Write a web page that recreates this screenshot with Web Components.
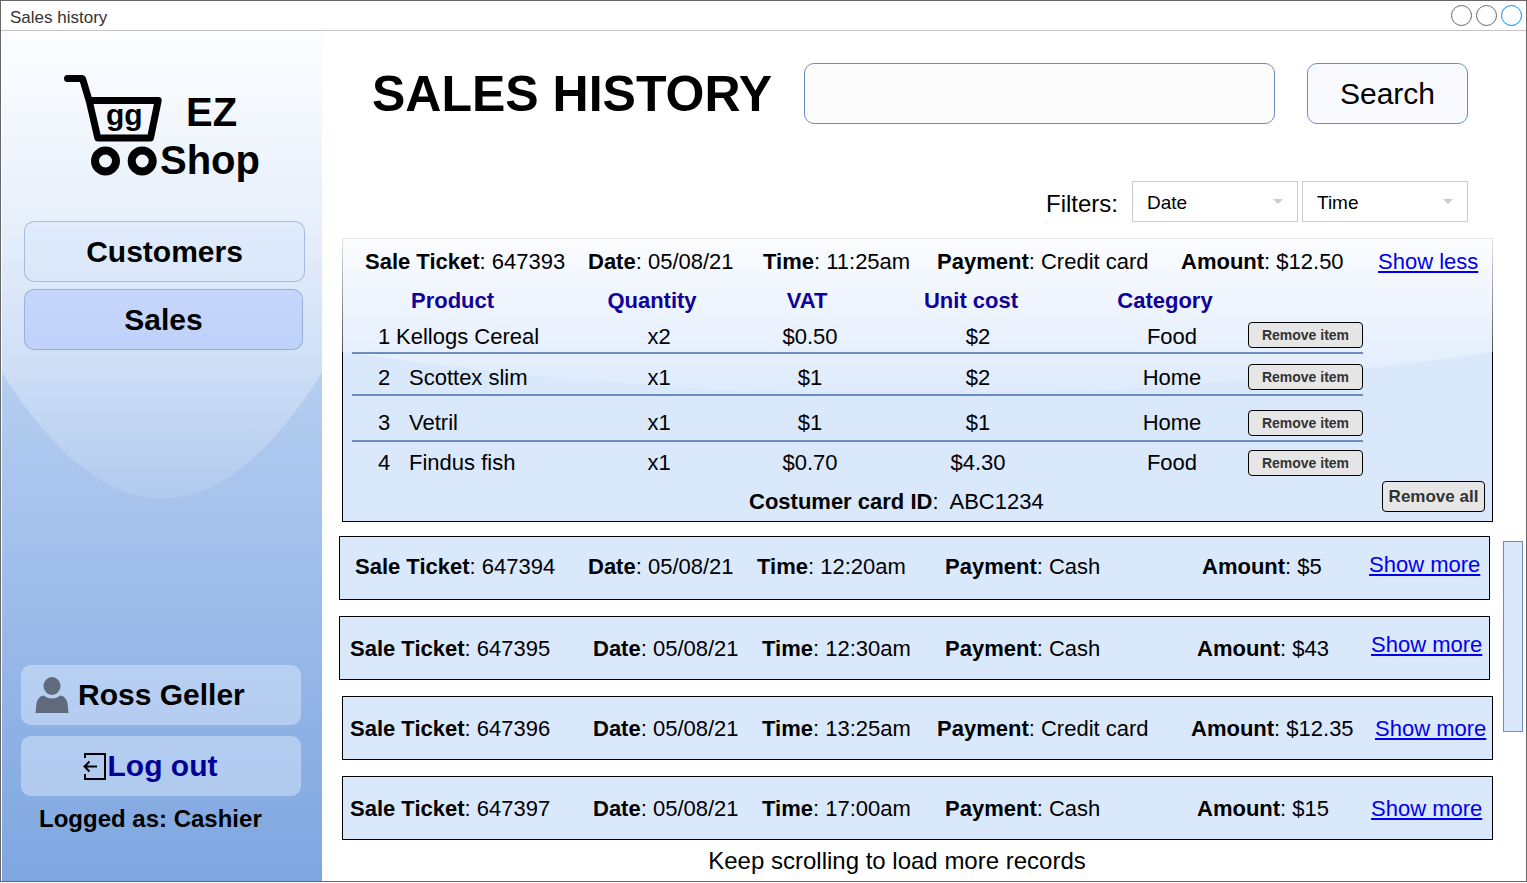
<!DOCTYPE html>
<html lang="en">
<head>
<meta charset="utf-8">
<title>Sales history</title>
<style>
  body { margin: 0; background: #fff; color: #000; font-family: "Liberation Sans", Arial, Helvetica, sans-serif; font-size: 22px; line-height: 26px; }
  .list { display: flex; flex-direction: column; gap: 16px; }
  sale-ticket { margin: 0 0 -2px 3px; }
  .early { margin-right: 3px; --link-lift: 8px; }
  .late { margin-left: 3px; }
  .a { --inset: 15px; --cols: 233fr 169fr 188fr 257fr 167fr 120fr; --text-lift: 4px; }
  .b { --inset: 10px; --cols: 243fr 169fr 183fr 252fr 174fr 118fr; }
  .c { --inset: 7px; --cols: 243fr 169fr 175fr 254fr 184fr 117fr; }
  .d { --inset: 7px; --cols: 243fr 169fr 183fr 252fr 174fr 121fr; }
</style>
</head>
<body>
<app-window caption="Sales history">
  <shop-sidebar slot="side" user="Ross Geller" role-name="Cashier"></shop-sidebar>
  <sales-toolbar heading="SALES HISTORY"></sales-toolbar>
  <scroll-pane>
    <div class="list">
      <sale-ticket></sale-ticket>
      <sale-row class="early a" ticket="647394" date="05/08/21" time="12:20am" payment="Cash" amount="$5"></sale-row>
      <sale-row class="early b" ticket="647395" date="05/08/21" time="12:30am" payment="Cash" amount="$43"></sale-row>
      <sale-row class="late c" ticket="647396" date="05/08/21" time="13:25am" payment="Credit card" amount="$12.35"></sale-row>
      <sale-row class="late d" ticket="647397" date="05/08/21" time="17:00am" payment="Cash" amount="$15"></sale-row>
    </div>
    <span slot="more">Keep scrolling to load more records</span>
  </scroll-pane>
</app-window>

<script>
class BaseElement extends HTMLElement {
  connectedCallback() {
    if (this.shadowRoot) return;
    this.attachShadow({ mode: "open" }).innerHTML = this.render();
  }
  val(name) { return this.getAttribute(name) || ""; }
}

customElements.define("app-window", class extends BaseElement {
  render() {
    return `<style>
      :host { display: flex; flex-direction: column; box-sizing: border-box; min-height: calc(100vh - 1px); border: 1px solid #666; }
      header { display: flex; align-items: center; justify-content: space-between; box-sizing: border-box; height: 30px; padding: 0 4px 0 9px; border-bottom: 1px solid #c4c4c4; }
      h1 { margin: 4px 0 0; font-size: 17px; line-height: 20px; font-weight: normal; color: #333; }
      .dots { display: flex; gap: 4px; }
      .dots i { box-sizing: border-box; width: 21px; height: 21px; border: 1px solid #666; border-radius: 50%; }
      .dots i:last-child { border-color: #008cff; }
      .body { flex: 1; display: grid; grid-template-columns: 322px minmax(0, 1fr); }
      main { padding: 0 3px 0 16px; }
    </style>
    <header><h1>${this.val("caption")}</h1><div class="dots"><i></i><i></i><i></i></div></header>
    <div class="body"><slot name="side"></slot><main><slot></slot></main></div>`;
  }
});

customElements.define("shop-sidebar", class extends BaseElement {
  render() {
    return `<style>
      :host { display: grid; margin: 0 1px; background: linear-gradient(#dae8fc, #7ea6e0); }
      .glass, .content { grid-area: 1 / 1; min-width: 0; min-height: 0; }
      .glass { width: 100%; height: 100%; contain: size; }
      .content { display: flex; flex-direction: column; padding: 44px 21px 50px 19px; }
      .logo { display: block; margin: 0 0 0 43px; }
      .logo text { font-family: inherit; font-weight: bold; font-size: 40px; }
      .logo .mark { font-size: 30px; }
      nav { display: flex; flex-direction: column; gap: 7px; margin: 36px 0 0 3px; }
      nav a, .user, button { box-sizing: border-box; border-radius: 10px; font: bold 30px/34px "Liberation Sans", Arial, sans-serif; }
      nav a { display: flex; align-items: center; justify-content: center; height: 61px; color: #000; text-decoration: none; border: 1px solid rgba(108,142,191,.5); background: rgba(218,232,252,.5); margin-right: -4px; }
      nav a.on { background: rgba(176,195,253,.5); margin-right: -2px; }
      .foot { margin-top: auto; display: flex; flex-direction: column; gap: 11px; }
      .user, button { height: 60px; border: 1px solid rgba(218,232,252,.1); background: rgba(218,232,252,.5); color: #000; display: flex; align-items: center; }
      .user { gap: 9px; padding: 0 13px; }
      button { justify-content: center; gap: 2px; padding: 0 22px 0 0; color: #009; }
      p { margin: 0 0 0 18px; font-size: 24px; line-height: 24px; font-weight: bold; }
    </style>
    <svg class="glass" viewBox="0 0 320 850" preserveAspectRatio="none" aria-hidden="true">
      <defs><linearGradient id="g" x1="0" y1="0" x2="0" y2="1"><stop offset="0" stop-color="#fff" stop-opacity=".9"/><stop offset="1" stop-color="#fff" stop-opacity=".1"/></linearGradient></defs>
      <path d="M0 0V342Q160 594 320 342V0Z" fill="url(#g)"/>
    </svg>
    <div class="content">
      <svg class="logo" width="200" height="110" viewBox="64 75 200 110" role="img" aria-label="EZ Shop">
        <g fill="none" stroke="#000" stroke-width="7" stroke-linecap="round" stroke-linejoin="round">
          <path d="M67.500 78.500H82.500L89.500 102L97.800 138H150.500L158.200 100.500H91"/>
          <g stroke-width="8"><circle cx="105.500" cy="161" r="10.500"/><circle cx="142.200" cy="161" r="10.500"/></g>
        </g>
        <text class="mark" x="106" y="125">gg</text>
        <text x="186" y="126">EZ</text>
        <text x="160" y="174">Shop</text>
      </svg>
      <nav><a href="#customers">Customers</a><a class="on" href="#sales" aria-current="page">Sales</a></nav>
      <div class="foot">
        <div class="user">
          <svg width="34" height="38" viewBox="0 0 34 38" fill="#5f6b7d" aria-hidden="true"><ellipse cx="17" cy="10" rx="8.500" ry="9"/><path d="M.5 37L1.500 27Q3 20.500 8.500 19.500Q12.500 22.500 17 22.500Q21.500 22.500 25.500 19.500Q31 20.500 32.500 27L33.500 37Z"/></svg>
          <span>${this.val("user")}</span>
        </div>
        <button type="button">
          <svg width="23" height="28" viewBox="0 0 23 28" fill="none" stroke="#000" stroke-width="2" aria-hidden="true"><path d="M2 6V2H22V27H2V22M14 14.500H2M6.500 9.500L1.500 14.500L6.500 19.500"/></svg>
          <span>Log out</span>
        </button>
        <p>Logged as: ${this.val("role-name")}</p>
      </div>
    </div>`;
  }
});

customElements.define("sales-toolbar", class extends BaseElement {
  render() {
    return `<style>
      :host { display: block; padding: 32px 55px 16px 33px; }
      form, .filters { display: flex; align-items: center; }
      h2 { margin: 0 32px 0 0; font-size: 50px; line-height: 60px; white-space: nowrap; }
      input, button { box-sizing: border-box; height: 61px; border: 1px solid #6c8ebf; border-radius: 10px; font: 30px/34px "Liberation Sans", Arial, sans-serif; color: #000; }
      input { flex: 1; min-width: 0; padding: 0 16px; background: #fcfcfc; }
      button { width: 161px; margin-left: 32px; background: #f8faff; }
      .filters { justify-content: flex-end; gap: 4px; margin-top: 57px; }
      .filters > label { font-size: 24px; line-height: 28px; margin-right: 10px; padding-top: 4px; }
      .pick { display: grid; align-items: center; width: 166px; }
      .pick > * { grid-area: 1 / 1; }
      .pick svg { justify-self: end; margin-right: 15px; pointer-events: none; }
      select { appearance: none; box-sizing: border-box; width: 100%; height: 41px; padding: 2px 14px 0; border: 1px solid #ccc; border-radius: 0; background: #fff; color: #000; font: 19px/22px "Liberation Sans", Arial, sans-serif; }
    </style>
    <form onsubmit="return false"><h2>${this.val("heading")}</h2><input type="text" aria-label="Search sales"><button type="submit">Search</button></form>
    <div class="filters">
      <label for="date">Filters:</label>
      ${["Date", "Time"].map(n => `<div class="pick"><select id="${n.toLowerCase()}" aria-label="${n}"><option>${n}</option></select><svg width="10" height="5" viewBox="0 0 10 5" aria-hidden="true"><path d="M0 0H10L5 5Z" fill="#ccc"/></svg></div>`).join("")}
    </div>`;
  }
});

customElements.define("scroll-pane", class extends BaseElement {
  render() {
    return `<style>
      :host { display: grid; grid-template-columns: minmax(0, 1fr) 20px; column-gap: 10px; }
      .bar { padding-top: 303px; }
      .thumb { box-sizing: border-box; height: 191px; border: 1px solid #6c8ebf; background: #dae8fc; }
      .more { margin-top: 7px; padding-right: 38px; text-align: center; font-size: 24px; line-height: 28px; }
    </style>
    <div><slot></slot><div class="more"><slot name="more"></slot></div></div>
    <div class="bar"><div class="thumb"></div></div>`;
  }
});

customElements.define("sale-summary", class extends BaseElement {
  render() {
    const fields = [["Sale Ticket", "ticket"], ["Date", "date"], ["Time", "time"], ["Payment", "payment"], ["Amount", "amount"]];
    return `<style>
      :host { display: grid; grid-template-columns: var(--cols); align-items: center; box-sizing: border-box; padding: 2px 0 0 var(--inset); white-space: nowrap; }
      span { padding-bottom: var(--text-lift, 0); }
      a { color: #00e; text-decoration: underline; justify-self: start; padding-bottom: var(--link-lift, 0); }
    </style>
    ${fields.map(([label, key]) => `<span><b>${label}</b>: ${this.val(key)}</span>`).join("")}
    <a href="#${this.val("ticket")}">${this.val("action")}</a>`;
  }
});

customElements.define("sale-row", class extends BaseElement {
  render() {
    const attrs = ["ticket", "date", "time", "payment", "amount"].map(k => `${k}="${this.val(k)}"`).join(" ");
    return `<style>
      :host { display: grid; box-sizing: border-box; height: 64px; border: 1px solid #000; background: #dae8fc; }
    </style>
    <sale-summary ${attrs} action="Show more"></sale-summary>`;
  }
});

customElements.define("sale-ticket", class extends BaseElement {
  render() {
    const items = [
      ["Kellogs Cereal", "x2", "$0.50", "$2", "Food"],
      ["Scottex slim", "x1", "$1", "$2", "Home"],
      ["Vetril", "x1", "$1", "$1", "Home"],
      ["Findus fish", "x1", "$0.70", "$4.30", "Food"]
    ];
    return `<style>
      :host { display: grid; }
      .card, .glass { grid-area: 1 / 1; min-width: 0; }
      .glass { width: 100%; height: 100%; contain: size; }
      .card { background: #dae8fc; border: 1px solid #000; }
      .content { grid-area: 1 / 1; min-width: 0; padding: 1px; }
      sale-summary { height: 46px; padding-bottom: 2px; --inset: 22px; --cols: 223fr 175fr 174fr 244fr 197fr 114fr; }
      .lines { padding: 0 129px 0 9px; }
      table { width: 100%; table-layout: fixed; border-spacing: 0; }
      th, td { box-sizing: border-box; padding: 0; text-align: center; white-space: nowrap; }
      th { height: 31px; color: #109; padding-right: 14px; }
      th:nth-child(4) { padding-right: 6px; }
      td:nth-child(1) { text-align: left; padding-left: 26px; }
      td:nth-child(2), th:nth-child(2) { text-align: left; padding-left: 13px; }
      th:nth-child(2) { padding-left: 15px; }
      tbody td { border-bottom: 2px solid #6c8ebf; }
      tbody tr:nth-child(1) td { height: 38px; padding-top: 6px; }
      tbody tr:nth-child(1) td:nth-child(2) { padding-left: 0; }
      tbody tr:nth-child(2) td { height: 42px; padding-top: 8px; }
      tbody tr:nth-child(3) td { height: 46px; padding-top: 10px; }
      tbody tr:nth-child(4) td { height: 39px; padding-top: 2px; border: 0; }
      tbody tr:nth-child(1) td:last-child { padding-top: 2px; }
      tbody tr:nth-child(2) td:last-child { padding-top: 6px; }
      button { display: block; box-sizing: border-box; border: 1px solid #000; border-radius: 4px; background: #e6e6e6; color: #333; padding: 0; white-space: nowrap; font-family: inherit; font-weight: bold; }
      td button { width: 115px; height: 26px; font-size: 14px; line-height: 16px; }
      .total { display: grid; grid-template-columns: 406fr 633fr 103px; padding: 0 7px 9px 0; }
      .total p { grid-column: 2; margin: 0; padding-top: 11px; line-height: 20px; white-space: pre; }
      .total button { height: 31px; font-size: 17px; line-height: 20px; }
    </style>
    <div class="card"></div>
    <svg class="glass" viewBox="0 0 1151 284" preserveAspectRatio="none" aria-hidden="true">
      <defs><linearGradient id="g" x1="0" y1="0" x2="0" y2="1"><stop offset="0" stop-color="#fff" stop-opacity=".9"/><stop offset="1" stop-color="#fff" stop-opacity=".1"/></linearGradient></defs>
      <path d="M0 0V114Q575.500 199 1151 114V0Z" fill="url(#g)"/>
    </svg>
    <div class="content">
      <sale-summary ticket="647393" date="05/08/21" time="11:25am" payment="Credit card" amount="$12.50" action="Show less"></sale-summary>
      <div class="lines"><table>
        <colgroup><col style="width:44px"><col style="width:162px"><col style="width:202px"><col style="width:100px"><col style="width:236px"><col style="width:152px"><col style="width:115px"></colgroup>
        <thead><tr><th></th><th>Product</th><th>Quantity</th><th>VAT</th><th>Unit cost</th><th>Category</th><th></th></tr></thead>
        <tbody>${items.map((r, i) => `<tr><td>${i + 1}</td>${r.map(c => `<td>${c}</td>`).join("")}<td><button type="button">Remove item</button></td></tr>`).join("")}</tbody>
      </table></div>
      <div class="total"><p><b>Costumer card ID</b>:  ABC1234</p><button type="button">Remove all</button></div>
    </div>`;
  }
});
</script>
</body>
</html>
